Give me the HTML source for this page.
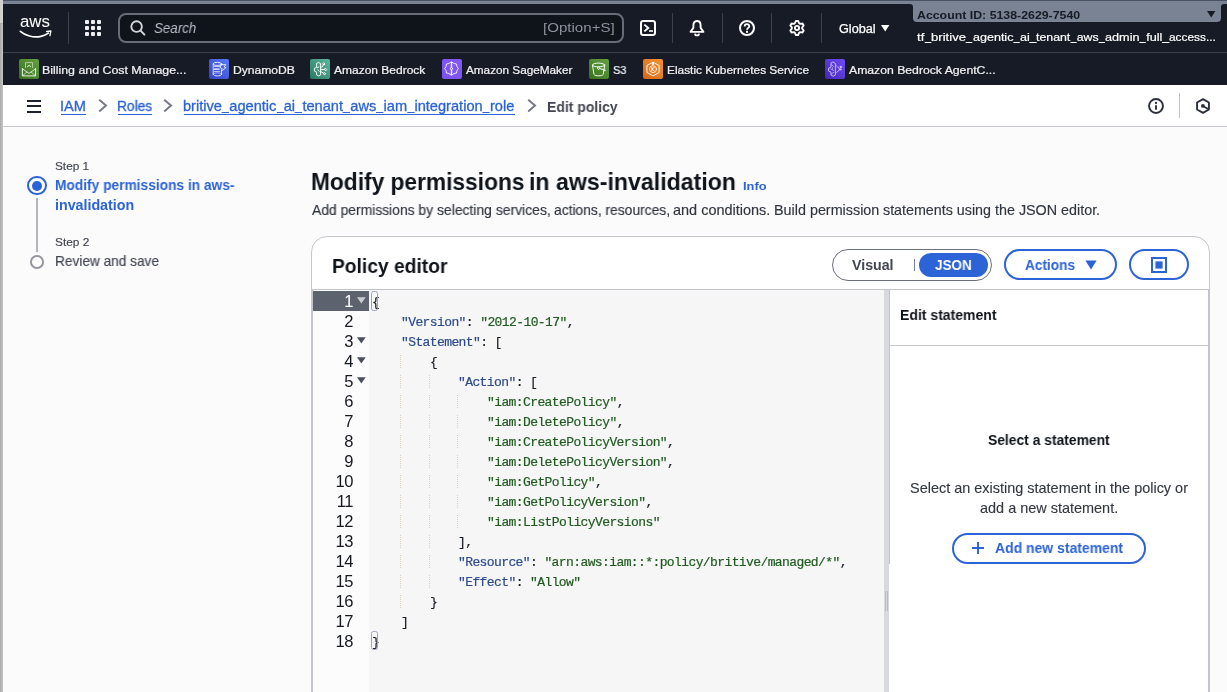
<!DOCTYPE html>
<html><head><meta charset="utf-8"><title>IAM</title>
<style>
html,body{margin:0;padding:0}
body{width:1227px;height:692px;overflow:hidden;position:relative;background:#fbfbfc;font-family:"Liberation Sans",sans-serif}
.t{position:absolute;white-space:pre;margin:0;will-change:transform}
.b{position:absolute;box-sizing:border-box}
svg{position:absolute;overflow:visible}
#w{position:absolute;left:0;top:0;width:1227px;height:692px;overflow:hidden}
</style></head><body>
<div id="w">
<div class="b" style="left:0;top:0;width:1227px;height:692px;background:#fbfbfc"></div>
<div class="b" style="left:3px;top:0;width:1224px;height:4px;background:#7a8394"></div>
<div class="b" style="left:3px;top:4px;width:1224px;height:81px;background:#161b25"></div>
<div class="b" style="left:3px;top:52px;width:1224px;height:1px;background:#3b414d"></div>
<div class="b" style="left:0;top:0;width:3px;height:692px;background:linear-gradient(90deg,#a9a9a9,#c6c6c6)"></div>
<div class="b" style="left:0;top:0;width:3px;height:23px;background:linear-gradient(90deg,#cfcfcd,#d4d4d2)"></div>
<div class="b" style="left:0;top:23px;width:3px;height:1px;background:#adadad"></div>
<div class="t" style="left:20.09px;top:12.00px;line-height:20px;font-size:16.6px;font-family:'Liberation Sans',sans-serif;color:#fff;transform:scaleX(1.0142);transform-origin:0 0;-webkit-text-stroke:0.05px #fff;">aws</div>
<svg style="left:0;top:0" width="60" height="45" viewBox="0 0 60 45"><path d="M20.3 31.3 C 25 35.4, 33 38.1, 41 36.3 C 44 35.6, 46.6 34.4, 48.3 33.1" fill="none" stroke="#fff" stroke-width="1.7" stroke-linecap="round"/><path d="M46.6 31.5 L50.9 31 L50 35.6" fill="none" stroke="#fff" stroke-width="1.3" stroke-linejoin="round" stroke-linecap="round"/></svg>
<div class="b" style="left:68px;top:12px;width:1px;height:32px;background:#3b414d"></div>
<svg style="left:85px;top:20px" width="16" height="16" viewBox="0 0 16 16"><rect x="0" y="0" width="4" height="4" rx="0.9" fill="#efeff3"/><rect x="6" y="0" width="4" height="4" rx="0.9" fill="#efeff3"/><rect x="12" y="0" width="4" height="4" rx="0.9" fill="#efeff3"/><rect x="0" y="6" width="4" height="4" rx="0.9" fill="#efeff3"/><rect x="6" y="6" width="4" height="4" rx="0.9" fill="#efeff3"/><rect x="12" y="6" width="4" height="4" rx="0.9" fill="#efeff3"/><rect x="0" y="12" width="4" height="4" rx="0.9" fill="#efeff3"/><rect x="6" y="12" width="4" height="4" rx="0.9" fill="#efeff3"/><rect x="12" y="12" width="4" height="4" rx="0.9" fill="#efeff3"/></svg>
<div class="b" style="left:118px;top:13px;width:506px;height:30px;border:2px solid #676c78;border-radius:8px;background:#0f131a"></div>
<svg style="left:129.2px;top:19.1px" width="18" height="18" viewBox="0 0 18 18"><circle cx="7.6" cy="7.6" r="5.3" fill="none" stroke="#d3d4dc" stroke-width="1.9"/><path d="M11.6 11.6 L15.4 15.6" stroke="#d3d4dc" stroke-width="2" stroke-linecap="round"/></svg>
<div class="t" style="left:154.42px;top:18.00px;line-height:20px;font-size:14px;font-family:'Liberation Sans',sans-serif;color:#b9bcc6;transform:scaleX(0.9539);transform-origin:0 0;font-style:italic;">Search</div>
<div class="t" style="left:543.40px;top:18.00px;line-height:20px;font-size:13.6px;font-family:'Liberation Sans',sans-serif;color:#8d919c;transform:scaleX(1.1097);transform-origin:0 0;">[Option+S]</div>
<div class="b" style="left:672px;top:13px;width:1px;height:30px;background:#3b414d"></div>
<div class="b" style="left:722px;top:13px;width:1px;height:30px;background:#3b414d"></div>
<div class="b" style="left:771px;top:13px;width:1px;height:30px;background:#3b414d"></div>
<div class="b" style="left:821px;top:13px;width:1px;height:30px;background:#3b414d"></div>
<svg style="left:640px;top:20px" width="16" height="16" viewBox="0 0 16 16"><rect x="1" y="1" width="14" height="14" rx="2.2" fill="none" stroke="#fff" stroke-width="2"/><path d="M4.3 4.6 L8.3 8 L4.3 11.4" fill="none" stroke="#fff" stroke-width="1.9"/><path d="M9 11 H13" stroke="#fff" stroke-width="1.6"/></svg>
<svg style="left:689px;top:20px" width="16" height="16" viewBox="0 0 16 16"><path d="M8 1 C5.3 1 4.4 3.2 4.4 5.2 V7.8 L1.6 11.9 H14.4 L11.6 7.8 V5.2 C11.6 3.2 10.7 1 8 1 Z" fill="none" stroke="#fff" stroke-width="1.9" stroke-linejoin="round"/><path d="M5.9 13.6 C6.1 16 9.9 16 10.1 13.6" fill="none" stroke="#fff" stroke-width="1.7"/></svg>
<svg style="left:739px;top:20px" width="16" height="16" viewBox="0 0 16 16"><circle cx="8" cy="8" r="7" fill="none" stroke="#fff" stroke-width="2"/><path d="M5.7 6.4 C5.7 3.5 10.3 3.5 10.3 6.2 C10.3 7.9 8 7.9 8 9.8" fill="none" stroke="#fff" stroke-width="1.8"/><rect x="7" y="10.8" width="2" height="2" fill="#fff"/></svg>
<svg style="left:789px;top:20px" width="16" height="16" viewBox="0 0 16 16"><path d="M6.89 0.99 L9.11 0.99 L10.07 3.23 L11.10 3.83 L13.52 3.53 L14.63 5.46 L13.17 7.40 L13.17 8.60 L14.63 10.54 L13.52 12.47 L11.10 12.17 L10.07 12.77 L9.11 15.01 L6.89 15.01 L5.93 12.77 L4.90 12.17 L2.48 12.47 L1.37 10.54 L2.83 8.60 L2.83 7.40 L1.37 5.46 L2.48 3.53 L4.90 3.83 L5.93 3.23 Z" fill="none" stroke="#fff" stroke-width="1.9" stroke-linejoin="round"/><circle cx="8" cy="8" r="2.1" fill="none" stroke="#fff" stroke-width="1.9"/></svg>
<div class="t" style="left:838.87px;top:19.00px;line-height:20px;font-size:12px;font-family:'Liberation Sans',sans-serif;color:#fff;transform:scaleX(1.0571);transform-origin:0 0;-webkit-text-stroke:0.25px #fff;">Global</div>
<svg style="left:881px;top:25px" width="9" height="7" viewBox="0 0 9 7"><path d="M0 0 H8.4 L4.2 6.6 Z" fill="#fff"/></svg>
<div class="b" style="left:905px;top:4px;width:8px;height:5px;background:#7a8394"></div>
<div class="b" style="left:880px;top:4px;width:33px;height:12px;background:#161b25;border-top-right-radius:3px"></div>
<div class="b" style="left:913px;top:0;width:1308px;height:22px;background:#7a8394;border-radius:0 0 4px 4px;width:308px"></div>
<div class="b" style="left:1221px;top:4px;width:6px;height:5px;background:#7a8394"></div>
<div class="b" style="left:1221px;top:4px;width:6px;height:12px;background:#161b25;border-top-left-radius:3px"></div>
<div class="t" style="left:917.08px;top:5.00px;line-height:20px;font-size:11.2px;font-family:'Liberation Sans',sans-serif;color:#161b25;transform:scaleX(1.1024);transform-origin:0 0;font-weight:700;">Account ID: 5138-2629-7540</div>
<svg style="left:1207px;top:11px" width="9" height="7" viewBox="0 0 9 7"><path d="M0 0 H8.4 L4.2 6.4 Z" fill="#161b25"/></svg>
<div class="t" style="left:917.29px;top:27.00px;line-height:20px;font-size:11.8px;font-family:'Liberation Sans',sans-serif;color:#fff;transform:scaleX(1.1061);transform-origin:0 0;-webkit-text-stroke:0.2px #fff;">tf<span style="display:inline-block;width:6.2px;height:1px;background:#fff;vertical-align:-1.6px"></span>britive<span style="display:inline-block;width:6.2px;height:1px;background:#fff;vertical-align:-1.6px"></span></div>
<div class="t" style="left:972.57px;top:27.00px;line-height:20px;font-size:11.8px;font-family:'Liberation Sans',sans-serif;color:#fff;transform:scaleX(1.0623);transform-origin:0 0;-webkit-text-stroke:0.2px #fff;">agentic<span style="display:inline-block;width:6.2px;height:1px;background:#fff;vertical-align:-1.6px"></span>ai<span style="display:inline-block;width:6.2px;height:1px;background:#fff;vertical-align:-1.6px"></span></div>
<div class="t" style="left:1036.20px;top:27.00px;line-height:20px;font-size:11.8px;font-family:'Liberation Sans',sans-serif;color:#fff;transform:scaleX(1.0445);transform-origin:0 0;-webkit-text-stroke:0.2px #fff;">tenant<span style="display:inline-block;width:6.2px;height:1px;background:#fff;vertical-align:-1.6px"></span>aws<span style="display:inline-block;width:6.2px;height:1px;background:#fff;vertical-align:-1.6px"></span></div>
<div class="t" style="left:1104.76px;top:27.00px;line-height:20px;font-size:11.8px;font-family:'Liberation Sans',sans-serif;color:#fff;transform:scaleX(1.0744);transform-origin:0 0;-webkit-text-stroke:0.2px #fff;">admin<span style="display:inline-block;width:6.2px;height:1px;background:#fff;vertical-align:-1.6px"></span>full<span style="display:inline-block;width:6.2px;height:1px;background:#fff;vertical-align:-1.6px"></span></div>
<div class="t" style="left:1168.70px;top:27.00px;line-height:20px;font-size:11.8px;font-family:'Liberation Sans',sans-serif;color:#fff;transform:scaleX(1.0067);transform-origin:0 0;-webkit-text-stroke:0.2px #fff;">access...</div>
<div class="b" style="left:3px;top:0;width:1224px;height:1px;background:#4a5363"></div>
<div class="b" style="left:19px;top:59px;width:20px;height:20px;border-radius:2px;background:linear-gradient(45deg,#36711b,#65a142)"></div>
<svg style="left:19px;top:59px" width="20" height="20" viewBox="0 0 20 20"><g stroke="#fff" fill="none" stroke-width="0.95" stroke-linejoin="round" stroke-linecap="round"><path d="M6.5 8.6 V3.6 H13.5 V8.6" opacity=".6" stroke-width=".9"/><path d="M8.4 7.6 L10.2 6.3 L11.6 7.6" opacity=".9"/><path d="M3.4 9.6 V16.9 H16.6 V9.6" stroke-width=".9"/><path d="M3.4 9.8 L10 14.4 L16.6 9.8" stroke-width=".85" opacity=".9"/><path d="M3.7 16.6 L7.9 13.1 M16.3 16.6 L12.1 13.1" opacity=".75" stroke-width=".8"/></g></svg>
<div class="t" style="left:42.25px;top:60.00px;line-height:20px;font-size:11.7px;font-family:'Liberation Sans',sans-serif;color:#f0f0f3;transform:scaleX(1.0579);transform-origin:0 0;-webkit-text-stroke:0.24px #f0f0f3;">Billing and Cost Manage...</div>
<div class="b" style="left:209px;top:59px;width:20px;height:20px;border-radius:2px;background:linear-gradient(45deg,#3440c4,#577cf7)"></div>
<svg style="left:209px;top:59px" width="20" height="20" viewBox="0 0 20 20"><g stroke="#fff" fill="none" stroke-width="0.8" stroke-linejoin="round" stroke-linecap="round"><ellipse cx="8.4" cy="4.9" rx="4.2" ry="1.6"/><path d="M4.2 4.9 V15.3 M12.6 4.9 V6.2 M12.6 12.6 V15.3"/><path d="M4.2 15.3 C4.2 17.6 12.6 17.6 12.6 15.3"/><path d="M4.6 14.8 C5.4 13.4 11.4 13.4 12.2 14.8" opacity=".6"/><path d="M5.2 7.5 H10.6 M5.2 12.6 H10.6" opacity=".85"/><path d="M5.2 10.1 H10.2" stroke-width="1.2"/><path d="M12.3 5.6 H16.7 L15.2 8 L17.1 8.6 L12.1 12.3 L13.2 9.5 L11.5 8.9 Z" stroke-width=".8"/></g></svg>
<div class="t" style="left:232.67px;top:60.00px;line-height:20px;font-size:11.7px;font-family:'Liberation Sans',sans-serif;color:#f0f0f3;transform:scaleX(1.0360);transform-origin:0 0;-webkit-text-stroke:0.24px #f0f0f3;">DynamoDB</div>
<div class="b" style="left:310px;top:59px;width:20px;height:20px;border-radius:2px;background:linear-gradient(45deg,#2a7864,#5db89d)"></div>
<svg style="left:310px;top:59px" width="20" height="20" viewBox="0 0 20 20"><g stroke="#fff" fill="none" stroke-width="0.95" stroke-linejoin="round" stroke-linecap="round" stroke-width="0.9"><path d="M8.6 3.6 L10.6 4.6 V16 L8.6 17 L6.6 15.9 V13.1 L4.4 12 V9.4 L6.6 8.4 V4.8 Z"/><path d="M6.6 8.2 Q8 9.8 9.2 7.6 M7.8 10.6 L9.2 12.4" opacity=".85"/><path d="M10.6 8 H12.2 L13.4 5.6 M10.6 10.6 H14.4 M10.6 13 H12 L13.4 14.4"/><path d="M13.9 3.9 L15 5 L13.9 6.1 L12.8 5 Z M15.6 9.4 L16.8 10.6 L15.6 11.8 L14.4 10.6 Z M14.4 13.6 L15.8 14.8 L14.2 15.9 L13.4 14.6 Z"/></g></svg>
<div class="t" style="left:334.20px;top:60.00px;line-height:20px;font-size:11.7px;font-family:'Liberation Sans',sans-serif;color:#f0f0f3;transform:scaleX(1.0258);transform-origin:0 0;-webkit-text-stroke:0.24px #f0f0f3;">Amazon Bedrock</div>
<div class="b" style="left:442px;top:59px;width:20px;height:20px;border-radius:2px;background:linear-gradient(45deg,#7b52f3,#8259f8)"></div>
<svg style="left:442px;top:59px" width="20" height="20" viewBox="0 0 20 20"><g stroke="#fff" fill="none" stroke-width="0.85" stroke-linejoin="round" stroke-linecap="round"><path d="M8.95 3.07 L6.92 4.51 L4.50 4.96 L4.05 7.43 L2.65 9.50 L4.05 11.57 L4.50 14.04 L6.92 14.49 L8.95 15.93 Z"/><path d="M10.05 3.07 L12.08 4.51 L14.50 4.96 L14.95 7.43 L16.35 9.50 L14.95 11.57 L14.50 14.04 L12.08 14.49 L10.05 15.93 Z"/><circle cx="9.5" cy="9.6" r="1.05" fill="#7b52f3"/></g></svg>
<div class="t" style="left:466.40px;top:60.00px;line-height:20px;font-size:11.7px;font-family:'Liberation Sans',sans-serif;color:#f0f0f3;transform:scaleX(1.0047);transform-origin:0 0;-webkit-text-stroke:0.24px #f0f0f3;">Amazon SageMaker</div>
<div class="b" style="left:589px;top:59px;width:20px;height:20px;border-radius:2px;background:linear-gradient(45deg,#36711b,#65a142)"></div>
<svg style="left:589px;top:59px" width="20" height="20" viewBox="0 0 20 20"><g stroke="#fff" fill="none" stroke-width="0.95" stroke-linejoin="round" stroke-linecap="round"><ellipse cx="9.6" cy="6" rx="6.1" ry="1.9"/><path d="M3.5 6.2 L5 15.4 C6 17.3 13.2 17.3 14.2 15.4 L15.7 6.2"/><path d="M9.6 8 L10.8 9.3 L9.6 10.6 L8.4 9.3 Z M10.8 9.5 L16.4 11.3 L15 11.8" /></g></svg>
<div class="t" style="left:612.93px;top:60.00px;line-height:20px;font-size:11.7px;font-family:'Liberation Sans',sans-serif;color:#f0f0f3;transform:scaleX(0.9398);transform-origin:0 0;-webkit-text-stroke:0.24px #f0f0f3;">S3</div>
<div class="b" style="left:643px;top:59px;width:20px;height:20px;border-radius:2px;background:linear-gradient(45deg,#d4661c,#f5942e)"></div>
<svg style="left:643px;top:59px" width="20" height="20" viewBox="0 0 20 20"><g stroke="#fff" fill="none" stroke-width="0.95" stroke-linejoin="round" stroke-linecap="round" stroke-width="1"><path d="M9.4 3.4 L3.9 6.5 V13.5 L10 16.9 L16.1 13.5 V6.5 L10.6 3.4"/><path d="M9.4 3.4 V5.8 M10.6 3.4 V5.8"/><circle cx="10" cy="10.2" r="3.5" opacity=".8"/><path d="M8.9 8.4 V12 M11.3 8.4 L9.1 10.2 L11.3 12"/></g></svg>
<div class="t" style="left:666.59px;top:60.00px;line-height:20px;font-size:11.7px;font-family:'Liberation Sans',sans-serif;color:#f0f0f3;transform:scaleX(1.0166);transform-origin:0 0;-webkit-text-stroke:0.24px #f0f0f3;">Elastic Kubernetes Service</div>
<div class="b" style="left:825px;top:59px;width:20px;height:20px;border-radius:2px;background:linear-gradient(45deg,#4527b6,#6e4bf6)"></div>
<svg style="left:825px;top:59px" width="20" height="20" viewBox="0 0 20 20"><g stroke="#d3c6fa" fill="none" stroke-width="0.9" stroke-linejoin="round" stroke-linecap="round"><path d="M8.2 3.2 L10.4 4.4 V16 L8.2 17.2 L6 16 V13.2 L3.6 12 V9.2 L6 8 V4.4 Z"/><path d="M6.4 5.6 L8.4 7.4 M5.8 10 L8.6 11.4 M6.6 14.6 L8.8 13.4 M7.4 8.6 V10" opacity=".8"/><path d="M11.6 7 L15 10.4 L11.6 13.4" /><path d="M15.4 7.4 H16.6 V8.4 H15.4 Z M15.2 9.9 H16.2 V10.9 H15.2 Z" fill="#d3c6fa"/></g></svg>
<div class="t" style="left:849.30px;top:60.00px;line-height:20px;font-size:11.7px;font-family:'Liberation Sans',sans-serif;color:#f0f0f3;transform:scaleX(1.0445);transform-origin:0 0;-webkit-text-stroke:0.24px #f0f0f3;">Amazon Bedrock AgentC...</div>
<div class="b" style="left:3px;top:85px;width:1224px;height:42px;background:#fff;border-bottom:1px solid #c6c6cd"></div>
<div class="b" style="left:27px;top:100px;width:14px;height:2px;background:#1b222d"></div>
<div class="b" style="left:27px;top:105.3px;width:14px;height:2px;background:#1b222d"></div>
<div class="b" style="left:27px;top:110.6px;width:14px;height:2px;background:#1b222d"></div>
<div class="t" style="left:60.35px;top:96.00px;line-height:20px;font-size:14px;font-family:'Liberation Sans',sans-serif;color:#2c63d6;transform:scaleX(1.0398);transform-origin:0 0;-webkit-text-stroke:0.3px #2c63d6;">IAM</div>
<div class="b" style="left:61.1px;top:114px;width:24.7px;height:1px;background:#2c63d6"></div>
<div class="t" style="left:117.12px;top:96.00px;line-height:20px;font-size:14px;font-family:'Liberation Sans',sans-serif;color:#2c63d6;transform:scaleX(0.9825);transform-origin:0 0;-webkit-text-stroke:0.3px #2c63d6;">Roles</div>
<div class="b" style="left:117.7px;top:114px;width:34.800000000000004px;height:1px;background:#2c63d6"></div>
<div class="t" style="left:183.26px;top:96.00px;line-height:20px;font-size:14px;font-family:'Liberation Sans',sans-serif;color:#2c63d6;transform:scaleX(1.0433);transform-origin:0 0;-webkit-text-stroke:0.3px #2c63d6;">britive<span style="display:inline-block;width:7.0px;height:1px;background:#2c63d6;vertical-align:-1.8px"></span>agentic<span style="display:inline-block;width:7.0px;height:1px;background:#2c63d6;vertical-align:-1.8px"></span>ai<span style="display:inline-block;width:7.0px;height:1px;background:#2c63d6;vertical-align:-1.8px"></span>tenant<span style="display:inline-block;width:7.0px;height:1px;background:#2c63d6;vertical-align:-1.8px"></span>aws<span style="display:inline-block;width:7.0px;height:1px;background:#2c63d6;vertical-align:-1.8px"></span>iam<span style="display:inline-block;width:7.0px;height:1px;background:#2c63d6;vertical-align:-1.8px"></span>integration<span style="display:inline-block;width:7.0px;height:1px;background:#2c63d6;vertical-align:-1.8px"></span>role</div>
<div class="b" style="left:183.7px;top:114px;width:331.59999999999997px;height:1px;background:#2c63d6"></div>
<svg style="left:97.6px;top:99.4px" width="9" height="13" viewBox="0 0 9 13"><path d="M1.2 0.8 L8 6.6 L1.2 12.4" fill="none" stroke="#777a84" stroke-width="2"/></svg>
<svg style="left:163px;top:99.4px" width="9" height="13" viewBox="0 0 9 13"><path d="M1.2 0.8 L8 6.6 L1.2 12.4" fill="none" stroke="#777a84" stroke-width="2"/></svg>
<svg style="left:526.6px;top:99.4px" width="9" height="13" viewBox="0 0 9 13"><path d="M1.2 0.8 L8 6.6 L1.2 12.4" fill="none" stroke="#777a84" stroke-width="2"/></svg>
<div class="t" style="left:546.91px;top:97.00px;line-height:20px;font-size:14.2px;font-family:'Liberation Sans',sans-serif;color:#424650;transform:scaleX(0.9845);transform-origin:0 0;font-weight:700;">Edit policy</div>
<svg style="left:1148px;top:97.9px" width="16" height="16" viewBox="0 0 16 16"><circle cx="8" cy="8" r="6.95" fill="none" stroke="#2a2f3a" stroke-width="1.9"/><path d="M8 7.2 V11.8" stroke="#2a2f3a" stroke-width="1.9"/><circle cx="8" cy="5" r="1.15" fill="#2a2f3a"/></svg>
<div class="b" style="left:1179px;top:93px;width:1px;height:25px;background:#c0c0c9"></div>
<svg style="left:1195.1px;top:97.9px" width="16" height="16" viewBox="0 0 16 16"><path d="M8 1.1 L13.9 4.5 V11.5 L8 14.9 L2.1 11.5 V4.5 Z" fill="none" stroke="#2a2f3a" stroke-width="1.9" stroke-linejoin="round"/><circle cx="7.9" cy="7.9" r="1.9" fill="#2a2f3a"/><path d="M8 8 L13.4 11.2" stroke="#2a2f3a" stroke-width="1.8"/></svg>
<div class="t" style="left:55.10px;top:156.00px;line-height:20px;font-size:11.8px;font-family:'Liberation Sans',sans-serif;color:#424650;-webkit-text-stroke:0.15px #424650;">Step 1</div>
<div class="b" style="left:27.4px;top:176.2px;width:19.2px;height:19.2px;border-radius:50%;border:2px solid #2c63d6;background:#fff"></div>
<div class="b" style="left:32.1px;top:180.9px;width:9.8px;height:9.8px;border-radius:50%;background:#2c63d6"></div>
<div class="b" style="left:36px;top:198.4px;width:2px;height:54px;background:#b4b4bb"></div>
<div class="t" style="left:54.73px;top:175.00px;line-height:20px;font-size:14.2px;font-family:'Liberation Sans',sans-serif;color:#2c63d6;transform:scaleX(0.9690);transform-origin:0 0;font-weight:700;">Modify permissions in aws-</div>
<div class="t" style="left:54.70px;top:195.00px;line-height:20px;font-size:14.2px;font-family:'Liberation Sans',sans-serif;color:#2c63d6;transform:scaleX(1.0039);transform-origin:0 0;font-weight:700;">invalidation</div>
<div class="t" style="left:55.10px;top:232.00px;line-height:20px;font-size:11.8px;font-family:'Liberation Sans',sans-serif;color:#424650;transform:scaleX(1.0091);transform-origin:0 0;-webkit-text-stroke:0.15px #424650;">Step 2</div>
<div class="b" style="left:30.2px;top:255.3px;width:13.7px;height:13.7px;border-radius:50%;border:2.1px solid #9596a0;background:#fff"></div>
<div class="t" style="left:54.54px;top:251.00px;line-height:20px;font-size:14.2px;font-family:'Liberation Sans',sans-serif;color:#424650;transform:scaleX(0.9624);transform-origin:0 0;-webkit-text-stroke:0.15px #424650;">Review and save</div>
<div class="t" style="left:310.57px;top:172.00px;line-height:20px;font-size:23.8px;font-family:'Liberation Sans',sans-serif;color:#0f141a;transform:scaleX(0.9552);transform-origin:0 0;font-weight:700;">Modify permissions</div>
<div class="t" style="left:528.74px;top:172.00px;line-height:20px;font-size:23.8px;font-family:'Liberation Sans',sans-serif;color:#0f141a;transform:scaleX(0.9724);transform-origin:0 0;font-weight:700;">in aws-invalidation</div>
<div class="t" style="left:742.81px;top:176.00px;line-height:20px;font-size:11.4px;font-family:'Liberation Sans',sans-serif;color:#2c63d6;transform:scaleX(1.1263);transform-origin:0 0;font-weight:700;">Info</div>
<div class="t" style="left:311.70px;top:200.00px;line-height:20px;font-size:14.2px;font-family:'Liberation Sans',sans-serif;color:#30353f;transform:scaleX(0.9782);transform-origin:0 0;-webkit-text-stroke:0.15px #30353f;">Add permissions by</div>
<div class="t" style="left:437.41px;top:200.00px;line-height:20px;font-size:14.2px;font-family:'Liberation Sans',sans-serif;color:#30353f;transform:scaleX(0.9808);transform-origin:0 0;-webkit-text-stroke:0.15px #30353f;">selecting services,</div>
<div class="t" style="left:554.42px;top:200.00px;line-height:20px;font-size:14.2px;font-family:'Liberation Sans',sans-serif;color:#30353f;transform:scaleX(0.9744);transform-origin:0 0;-webkit-text-stroke:0.15px #30353f;">actions, resources,</div>
<div class="t" style="left:673.19px;top:200.00px;line-height:20px;font-size:14.2px;font-family:'Liberation Sans',sans-serif;color:#30353f;transform:scaleX(1.0203);transform-origin:0 0;-webkit-text-stroke:0.15px #30353f;">and conditions.</div>
<div class="t" style="left:773.79px;top:200.00px;line-height:20px;font-size:14.2px;font-family:'Liberation Sans',sans-serif;color:#30353f;transform:scaleX(1.0117);transform-origin:0 0;-webkit-text-stroke:0.15px #30353f;">Build permission</div>
<div class="t" style="left:883.10px;top:200.00px;line-height:20px;font-size:14.2px;font-family:'Liberation Sans',sans-serif;color:#30353f;transform:scaleX(1.0066);transform-origin:0 0;-webkit-text-stroke:0.15px #30353f;">statements using</div>
<div class="t" style="left:995.20px;top:200.00px;line-height:20px;font-size:14.2px;font-family:'Liberation Sans',sans-serif;color:#30353f;transform:scaleX(1.0097);transform-origin:0 0;-webkit-text-stroke:0.15px #30353f;">the JSON editor.</div>
<div class="b" style="left:311px;top:236px;width:899px;height:480px;border:1px solid #c6c6cd;border-radius:16px;background:#fff"></div>
<div class="t" style="left:331.95px;top:256.00px;line-height:20px;font-size:20px;font-family:'Liberation Sans',sans-serif;color:#0f141a;transform:scaleX(0.9620);transform-origin:0 0;font-weight:700;">Policy editor</div>
<div class="b" style="left:832px;top:249px;width:160px;height:32px;border:1px solid #6b6f7a;border-radius:16px;background:#fff"></div>
<div class="t" style="left:852.30px;top:255.00px;line-height:20px;font-size:14.2px;font-family:'Liberation Sans',sans-serif;color:#424650;font-weight:700;">Visual</div>
<div class="b" style="left:914px;top:259px;width:1px;height:12px;background:#7d808a"></div>
<div class="b" style="left:919px;top:253px;width:69px;height:24px;border-radius:12px;background:#2c63d6"></div>
<div class="t" style="left:935.01px;top:255.00px;line-height:20px;font-size:14.2px;font-family:'Liberation Sans',sans-serif;color:#fff;transform:scaleX(0.9493);transform-origin:0 0;font-weight:700;">JSON</div>
<div class="b" style="left:1004px;top:249.4px;width:112.6px;height:31px;border:2px solid #2c63d6;border-radius:15.5px;background:#fff"></div>
<div class="t" style="left:1025.31px;top:255.00px;line-height:20px;font-size:14.2px;font-family:'Liberation Sans',sans-serif;color:#2c63d6;transform:scaleX(0.9610);transform-origin:0 0;font-weight:700;">Actions</div>
<svg style="left:1085px;top:260px" width="12" height="10" viewBox="0 0 12 10"><path d="M0.4 0.6 H11.6 L6 9.4 Z" fill="#2c63d6"/></svg>
<div class="b" style="left:1129px;top:249.4px;width:59.8px;height:31px;border:2px solid #2c63d6;border-radius:15.5px;background:#fff"></div>
<svg style="left:1151px;top:257px" width="16" height="16" viewBox="0 0 16 16"><rect x="1" y="1" width="14" height="14" fill="none" stroke="#2c63d6" stroke-width="2"/><rect x="4.4" y="4.4" width="7.2" height="7.2" fill="#2c63d6"/></svg>
<div class="b" style="left:312px;top:289px;width:897px;height:1px;background:#c3c3cc"></div>
<div class="b" style="left:312px;top:290px;width:1px;height:402px;background:#c3c3cc"></div>
<div class="b" style="left:313px;top:290px;width:56px;height:402px;background:#fcfcfc"></div>
<div class="b" style="left:369px;top:290px;width:515px;height:402px;background:#f6f6f7"></div>
<div class="b" style="left:884px;top:290px;width:5px;height:402px;background:#d8d8df"></div>
<div class="b" style="left:889px;top:290px;width:320px;height:402px;background:#fff"></div>
<div class="b" style="left:889px;top:290px;width:1px;height:274px;background:#c3c3cc"></div>
<div class="b" style="left:1208px;top:290px;width:1px;height:402px;background:#c3c3cc"></div>
<div class="b" style="left:313px;top:291px;width:56px;height:20px;background:#5d636e"></div>
<div class="t" style="left:313px;width:39.9px;text-align:right;top:291.3px;line-height:20px;font-size:16.5px;letter-spacing:-0.5px;color:#fff">1</div>
<div class="t" style="left:313px;width:39.9px;text-align:right;top:311.3px;line-height:20px;font-size:16.5px;letter-spacing:-0.5px;color:#16191f">2</div>
<div class="t" style="left:313px;width:39.9px;text-align:right;top:331.3px;line-height:20px;font-size:16.5px;letter-spacing:-0.5px;color:#16191f">3</div>
<div class="t" style="left:313px;width:39.9px;text-align:right;top:351.3px;line-height:20px;font-size:16.5px;letter-spacing:-0.5px;color:#16191f">4</div>
<div class="t" style="left:313px;width:39.9px;text-align:right;top:371.3px;line-height:20px;font-size:16.5px;letter-spacing:-0.5px;color:#16191f">5</div>
<div class="t" style="left:313px;width:39.9px;text-align:right;top:391.3px;line-height:20px;font-size:16.5px;letter-spacing:-0.5px;color:#16191f">6</div>
<div class="t" style="left:313px;width:39.9px;text-align:right;top:411.3px;line-height:20px;font-size:16.5px;letter-spacing:-0.5px;color:#16191f">7</div>
<div class="t" style="left:313px;width:39.9px;text-align:right;top:431.3px;line-height:20px;font-size:16.5px;letter-spacing:-0.5px;color:#16191f">8</div>
<div class="t" style="left:313px;width:39.9px;text-align:right;top:451.3px;line-height:20px;font-size:16.5px;letter-spacing:-0.5px;color:#16191f">9</div>
<div class="t" style="left:313px;width:39.9px;text-align:right;top:471.3px;line-height:20px;font-size:16.5px;letter-spacing:-0.5px;color:#16191f">10</div>
<div class="t" style="left:313px;width:39.9px;text-align:right;top:491.3px;line-height:20px;font-size:16.5px;letter-spacing:-0.5px;color:#16191f">11</div>
<div class="t" style="left:313px;width:39.9px;text-align:right;top:511.3px;line-height:20px;font-size:16.5px;letter-spacing:-0.5px;color:#16191f">12</div>
<div class="t" style="left:313px;width:39.9px;text-align:right;top:531.3px;line-height:20px;font-size:16.5px;letter-spacing:-0.5px;color:#16191f">13</div>
<div class="t" style="left:313px;width:39.9px;text-align:right;top:551.3px;line-height:20px;font-size:16.5px;letter-spacing:-0.5px;color:#16191f">14</div>
<div class="t" style="left:313px;width:39.9px;text-align:right;top:571.3px;line-height:20px;font-size:16.5px;letter-spacing:-0.5px;color:#16191f">15</div>
<div class="t" style="left:313px;width:39.9px;text-align:right;top:591.3px;line-height:20px;font-size:16.5px;letter-spacing:-0.5px;color:#16191f">16</div>
<div class="t" style="left:313px;width:39.9px;text-align:right;top:611.3px;line-height:20px;font-size:16.5px;letter-spacing:-0.5px;color:#16191f">17</div>
<div class="t" style="left:313px;width:39.9px;text-align:right;top:631.3px;line-height:20px;font-size:16.5px;letter-spacing:-0.5px;color:#16191f">18</div>
<svg style="left:356.6px;top:297.4px" width="8.7" height="7" viewBox="0 0 9 7" preserveAspectRatio="none"><path d="M0 0.3 H9 L4.5 6.6 Z" fill="#c9ccd2"/></svg>
<svg style="left:356.6px;top:337.4px" width="8.7" height="7" viewBox="0 0 9 7" preserveAspectRatio="none"><path d="M0 0.3 H9 L4.5 6.6 Z" fill="#4a505b"/></svg>
<svg style="left:356.6px;top:357.4px" width="8.7" height="7" viewBox="0 0 9 7" preserveAspectRatio="none"><path d="M0 0.3 H9 L4.5 6.6 Z" fill="#4a505b"/></svg>
<svg style="left:356.6px;top:377.4px" width="8.7" height="7" viewBox="0 0 9 7" preserveAspectRatio="none"><path d="M0 0.3 H9 L4.5 6.6 Z" fill="#4a505b"/></svg>
<div class="t" style="left:372.0px;top:293.1px;line-height:20px;font-size:13px;letter-spacing:-0.6px;font-family:'Liberation Mono',monospace;-webkit-text-stroke:0.2px;"><span style="color:#1b1f27">{</span></div>
<div class="t" style="left:400.8px;top:313.1px;line-height:20px;font-size:13px;letter-spacing:-0.6px;font-family:'Liberation Mono',monospace;-webkit-text-stroke:0.2px;"><span style="color:#2d4a8c">"Version"</span><span style="color:#1b1f27">: </span><span style="color:#1f5a1f">"2012-10-17"</span><span style="color:#1b1f27">,</span></div>
<div class="t" style="left:400.8px;top:333.1px;line-height:20px;font-size:13px;letter-spacing:-0.6px;font-family:'Liberation Mono',monospace;-webkit-text-stroke:0.2px;"><span style="color:#2d4a8c">"Statement"</span><span style="color:#1b1f27">: [</span></div>
<div class="t" style="left:429.6px;top:353.1px;line-height:20px;font-size:13px;letter-spacing:-0.6px;font-family:'Liberation Mono',monospace;-webkit-text-stroke:0.2px;"><span style="color:#1b1f27">{</span></div>
<div class="t" style="left:458.4px;top:373.1px;line-height:20px;font-size:13px;letter-spacing:-0.6px;font-family:'Liberation Mono',monospace;-webkit-text-stroke:0.2px;"><span style="color:#2d4a8c">"Action"</span><span style="color:#1b1f27">: [</span></div>
<div class="t" style="left:487.2px;top:393.1px;line-height:20px;font-size:13px;letter-spacing:-0.6px;font-family:'Liberation Mono',monospace;-webkit-text-stroke:0.2px;"><span style="color:#1f5a1f">"iam:CreatePolicy"</span><span style="color:#1b1f27">,</span></div>
<div class="t" style="left:487.2px;top:413.1px;line-height:20px;font-size:13px;letter-spacing:-0.6px;font-family:'Liberation Mono',monospace;-webkit-text-stroke:0.2px;"><span style="color:#1f5a1f">"iam:DeletePolicy"</span><span style="color:#1b1f27">,</span></div>
<div class="t" style="left:487.2px;top:433.1px;line-height:20px;font-size:13px;letter-spacing:-0.6px;font-family:'Liberation Mono',monospace;-webkit-text-stroke:0.2px;"><span style="color:#1f5a1f">"iam:CreatePolicyVersion"</span><span style="color:#1b1f27">,</span></div>
<div class="t" style="left:487.2px;top:453.1px;line-height:20px;font-size:13px;letter-spacing:-0.6px;font-family:'Liberation Mono',monospace;-webkit-text-stroke:0.2px;"><span style="color:#1f5a1f">"iam:DeletePolicyVersion"</span><span style="color:#1b1f27">,</span></div>
<div class="t" style="left:487.2px;top:473.1px;line-height:20px;font-size:13px;letter-spacing:-0.6px;font-family:'Liberation Mono',monospace;-webkit-text-stroke:0.2px;"><span style="color:#1f5a1f">"iam:GetPolicy"</span><span style="color:#1b1f27">,</span></div>
<div class="t" style="left:487.2px;top:493.1px;line-height:20px;font-size:13px;letter-spacing:-0.6px;font-family:'Liberation Mono',monospace;-webkit-text-stroke:0.2px;"><span style="color:#1f5a1f">"iam:GetPolicyVersion"</span><span style="color:#1b1f27">,</span></div>
<div class="t" style="left:487.2px;top:513.1px;line-height:20px;font-size:13px;letter-spacing:-0.6px;font-family:'Liberation Mono',monospace;-webkit-text-stroke:0.2px;"><span style="color:#1f5a1f">"iam:ListPolicyVersions"</span></div>
<div class="t" style="left:458.4px;top:533.1px;line-height:20px;font-size:13px;letter-spacing:-0.6px;font-family:'Liberation Mono',monospace;-webkit-text-stroke:0.2px;"><span style="color:#1b1f27">],</span></div>
<div class="t" style="left:458.4px;top:553.1px;line-height:20px;font-size:13px;letter-spacing:-0.6px;font-family:'Liberation Mono',monospace;-webkit-text-stroke:0.2px;"><span style="color:#2d4a8c">"Resource"</span><span style="color:#1b1f27">: </span><span style="color:#1f5a1f">"arn:aws:iam::*:policy/britive/managed/*"</span><span style="color:#1b1f27">,</span></div>
<div class="t" style="left:458.4px;top:573.1px;line-height:20px;font-size:13px;letter-spacing:-0.6px;font-family:'Liberation Mono',monospace;-webkit-text-stroke:0.2px;"><span style="color:#2d4a8c">"Effect"</span><span style="color:#1b1f27">: </span><span style="color:#1f5a1f">"Allow"</span></div>
<div class="t" style="left:429.6px;top:593.1px;line-height:20px;font-size:13px;letter-spacing:-0.6px;font-family:'Liberation Mono',monospace;-webkit-text-stroke:0.2px;"><span style="color:#1b1f27">}</span></div>
<div class="t" style="left:400.8px;top:613.1px;line-height:20px;font-size:13px;letter-spacing:-0.6px;font-family:'Liberation Mono',monospace;-webkit-text-stroke:0.2px;"><span style="color:#1b1f27">]</span></div>
<div class="t" style="left:372.0px;top:633.1px;line-height:20px;font-size:13px;letter-spacing:-0.6px;font-family:'Liberation Mono',monospace;-webkit-text-stroke:0.2px;"><span style="color:#1b1f27">}</span></div>
<div class="b" style="left:399.8px;top:355px;width:1px;height:13px;background:repeating-linear-gradient(to bottom,#d9cfbd 0 1px,transparent 1px 2px)"></div>
<div class="b" style="left:399.8px;top:375px;width:1px;height:13px;background:repeating-linear-gradient(to bottom,#d9cfbd 0 1px,transparent 1px 2px)"></div>
<div class="b" style="left:428.6px;top:375px;width:1px;height:13px;background:repeating-linear-gradient(to bottom,#d9cfbd 0 1px,transparent 1px 2px)"></div>
<div class="b" style="left:399.8px;top:395px;width:1px;height:13px;background:repeating-linear-gradient(to bottom,#d9cfbd 0 1px,transparent 1px 2px)"></div>
<div class="b" style="left:428.6px;top:395px;width:1px;height:13px;background:repeating-linear-gradient(to bottom,#d9cfbd 0 1px,transparent 1px 2px)"></div>
<div class="b" style="left:457.4px;top:395px;width:1px;height:13px;background:repeating-linear-gradient(to bottom,#d9cfbd 0 1px,transparent 1px 2px)"></div>
<div class="b" style="left:399.8px;top:415px;width:1px;height:13px;background:repeating-linear-gradient(to bottom,#d9cfbd 0 1px,transparent 1px 2px)"></div>
<div class="b" style="left:428.6px;top:415px;width:1px;height:13px;background:repeating-linear-gradient(to bottom,#d9cfbd 0 1px,transparent 1px 2px)"></div>
<div class="b" style="left:457.4px;top:415px;width:1px;height:13px;background:repeating-linear-gradient(to bottom,#d9cfbd 0 1px,transparent 1px 2px)"></div>
<div class="b" style="left:399.8px;top:435px;width:1px;height:13px;background:repeating-linear-gradient(to bottom,#d9cfbd 0 1px,transparent 1px 2px)"></div>
<div class="b" style="left:428.6px;top:435px;width:1px;height:13px;background:repeating-linear-gradient(to bottom,#d9cfbd 0 1px,transparent 1px 2px)"></div>
<div class="b" style="left:457.4px;top:435px;width:1px;height:13px;background:repeating-linear-gradient(to bottom,#d9cfbd 0 1px,transparent 1px 2px)"></div>
<div class="b" style="left:399.8px;top:455px;width:1px;height:13px;background:repeating-linear-gradient(to bottom,#d9cfbd 0 1px,transparent 1px 2px)"></div>
<div class="b" style="left:428.6px;top:455px;width:1px;height:13px;background:repeating-linear-gradient(to bottom,#d9cfbd 0 1px,transparent 1px 2px)"></div>
<div class="b" style="left:457.4px;top:455px;width:1px;height:13px;background:repeating-linear-gradient(to bottom,#d9cfbd 0 1px,transparent 1px 2px)"></div>
<div class="b" style="left:399.8px;top:475px;width:1px;height:13px;background:repeating-linear-gradient(to bottom,#d9cfbd 0 1px,transparent 1px 2px)"></div>
<div class="b" style="left:428.6px;top:475px;width:1px;height:13px;background:repeating-linear-gradient(to bottom,#d9cfbd 0 1px,transparent 1px 2px)"></div>
<div class="b" style="left:457.4px;top:475px;width:1px;height:13px;background:repeating-linear-gradient(to bottom,#d9cfbd 0 1px,transparent 1px 2px)"></div>
<div class="b" style="left:399.8px;top:495px;width:1px;height:13px;background:repeating-linear-gradient(to bottom,#d9cfbd 0 1px,transparent 1px 2px)"></div>
<div class="b" style="left:428.6px;top:495px;width:1px;height:13px;background:repeating-linear-gradient(to bottom,#d9cfbd 0 1px,transparent 1px 2px)"></div>
<div class="b" style="left:457.4px;top:495px;width:1px;height:13px;background:repeating-linear-gradient(to bottom,#d9cfbd 0 1px,transparent 1px 2px)"></div>
<div class="b" style="left:399.8px;top:515px;width:1px;height:13px;background:repeating-linear-gradient(to bottom,#d9cfbd 0 1px,transparent 1px 2px)"></div>
<div class="b" style="left:428.6px;top:515px;width:1px;height:13px;background:repeating-linear-gradient(to bottom,#d9cfbd 0 1px,transparent 1px 2px)"></div>
<div class="b" style="left:457.4px;top:515px;width:1px;height:13px;background:repeating-linear-gradient(to bottom,#d9cfbd 0 1px,transparent 1px 2px)"></div>
<div class="b" style="left:399.8px;top:535px;width:1px;height:13px;background:repeating-linear-gradient(to bottom,#d9cfbd 0 1px,transparent 1px 2px)"></div>
<div class="b" style="left:428.6px;top:535px;width:1px;height:13px;background:repeating-linear-gradient(to bottom,#d9cfbd 0 1px,transparent 1px 2px)"></div>
<div class="b" style="left:399.8px;top:555px;width:1px;height:13px;background:repeating-linear-gradient(to bottom,#d9cfbd 0 1px,transparent 1px 2px)"></div>
<div class="b" style="left:428.6px;top:555px;width:1px;height:13px;background:repeating-linear-gradient(to bottom,#d9cfbd 0 1px,transparent 1px 2px)"></div>
<div class="b" style="left:399.8px;top:575px;width:1px;height:13px;background:repeating-linear-gradient(to bottom,#d9cfbd 0 1px,transparent 1px 2px)"></div>
<div class="b" style="left:428.6px;top:575px;width:1px;height:13px;background:repeating-linear-gradient(to bottom,#d9cfbd 0 1px,transparent 1px 2px)"></div>
<div class="b" style="left:399.8px;top:595px;width:1px;height:13px;background:repeating-linear-gradient(to bottom,#d9cfbd 0 1px,transparent 1px 2px)"></div>
<div class="b" style="left:371px;top:291px;width:7px;height:19.5px;border:1px solid #9fa3b8;border-radius:2.5px"></div>
<div class="b" style="left:371px;top:630.5px;width:7px;height:19.5px;border:1px solid #9fa3b8;border-radius:2.5px"></div>
<div class="b" style="left:885px;top:591px;width:3px;height:20px;border-left:1px solid #b9bac4;border-right:1px solid #b9bac4"></div>
<div class="t" style="left:899.71px;top:305.00px;line-height:20px;font-size:14.2px;font-family:'Liberation Sans',sans-serif;color:#0f141a;transform:scaleX(0.9876);transform-origin:0 0;font-weight:700;">Edit statement</div>
<div class="b" style="left:889px;top:345px;width:320px;height:1px;background:#c6c6cd"></div>
<div class="t" style="left:988.11px;top:430.00px;line-height:20px;font-size:14.2px;font-family:'Liberation Sans',sans-serif;color:#0f141a;transform:scaleX(0.9767);transform-origin:0 0;font-weight:700;">Select a statement</div>
<div class="t" style="left:910.09px;top:478.00px;line-height:20px;font-size:14.2px;font-family:'Liberation Sans',sans-serif;color:#33373f;transform:scaleX(1.0187);transform-origin:0 0;-webkit-text-stroke:0.12px #33373f;">Select an existing statement in the policy or</div>
<div class="t" style="left:980.29px;top:498.00px;line-height:20px;font-size:14.2px;font-family:'Liberation Sans',sans-serif;color:#33373f;transform:scaleX(1.0187);transform-origin:0 0;-webkit-text-stroke:0.12px #33373f;">add a new statement.</div>
<div class="b" style="left:952.4px;top:532.5px;width:193.4px;height:31.3px;border:2px solid #2c63d6;border-radius:16px;background:#fff"></div>
<svg style="left:971px;top:541.2px" width="14" height="14" viewBox="0 0 14 14"><path d="M7 1 V13 M1 7 H13" stroke="#2c63d6" stroke-width="1.9"/></svg>
<div class="t" style="left:995.00px;top:538.00px;line-height:20px;font-size:14.2px;font-family:'Liberation Sans',sans-serif;color:#2c63d6;transform:scaleX(0.9846);transform-origin:0 0;font-weight:700;">Add new statement</div>
</div>
</body></html>
